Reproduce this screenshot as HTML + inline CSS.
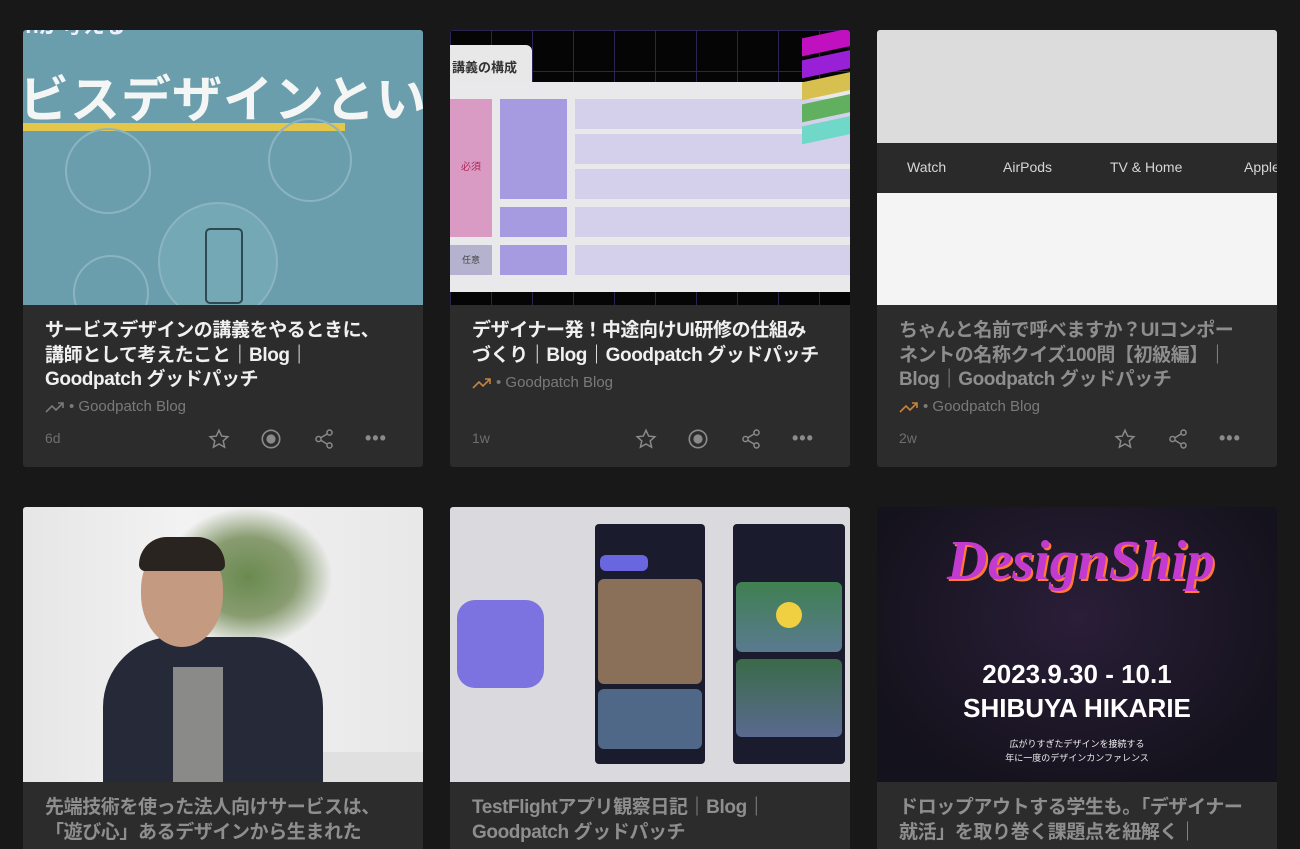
<!DOCTYPE html>
<html><head><meta charset="utf-8"><style>
*{margin:0;padding:0;box-sizing:border-box}
html,body{width:1300px;height:849px;overflow:hidden}
body{background:#181818;font-family:"Liberation Sans","Noto Sans CJK JP",sans-serif;position:relative}
.card{position:absolute;width:400px;height:437px;background:#2c2c2c;border-radius:3px;overflow:hidden}
.card.b{height:342px;border-radius:3px 3px 0 0}
.img{position:absolute;left:0;top:0;width:400px;height:275px;overflow:hidden}
.t{position:absolute;left:22px;top:289px;width:350px;font-size:19px;font-weight:bold;line-height:24.5px;color:#f0f0f0;letter-spacing:-0.4px}
.t.r{color:#8e8e8e}
.src{position:absolute;left:22px;top:368px;font-size:15px;color:#7a7a7a;display:flex;align-items:center;gap:4px}
.meta{position:absolute;left:22px;top:400px;font-size:14px;color:#6e6e6e}
.ic{position:absolute;top:398px}
</style></head><body>

<!-- card 1 -->
<div class="card" style="left:23px;top:30px">
 <div class="img" style="background:#6a9eac">
  <div style="position:absolute;left:-10px;top:-22px;font-size:22px;font-weight:bold;color:#eef">chが考える</div>
  <div style="position:absolute;left:-4px;top:30px;font-size:50px;font-weight:bold;color:#f4f6f6;white-space:nowrap;letter-spacing:1px">ビスデザインとい</div>
  <div style="position:absolute;left:0;top:93px;width:322px;height:8px;background:#e3c64a"></div>
  <div style="position:absolute;left:42px;top:98px;width:86px;height:86px;border-radius:50%;border:2px solid #8bb4c0"></div>
  <div style="position:absolute;left:245px;top:88px;width:84px;height:84px;border-radius:50%;border:2px solid #8bb4c0"></div>
  <div style="position:absolute;left:135px;top:172px;width:120px;height:120px;border-radius:50%;border:2px solid #8bb4c0;background:#74a8b5"></div>
  <div style="position:absolute;left:182px;top:198px;width:38px;height:76px;border-radius:5px;border:2px solid #2d4a52"></div>
  <div style="position:absolute;left:50px;top:225px;width:76px;height:76px;border-radius:50%;border:2px solid #8bb4c0"></div>
 </div>
 <div class="t">サービスデザインの講義をやるときに、講師として考えたこと｜Blog｜Goodpatch グッドパッチ</div>
 <div class="src"><svg width="20" height="12" viewBox="0 0 20 12"><path d="M1 11l6-6 4 4 7-7M13 2h5v5" fill="none" stroke="#7a7a7a" stroke-width="1.6"/></svg> • Goodpatch Blog</div>
 <div class="meta">6d</div>
 <svg class="ic" style="left:185px" width="22" height="22" viewBox="0 0 24 24"><path d="M12 2.5l2.9 6.3 6.8.7-5.1 4.6 1.5 6.8L12 17.4l-6.1 3.5 1.5-6.8-5.1-4.6 6.8-.7z" fill="none" stroke="#8a8a8a" stroke-width="1.6"/></svg>
 <svg class="ic" style="left:237px" width="22" height="22" viewBox="0 0 24 24"><circle cx="12" cy="12" r="9.5" fill="none" stroke="#8a8a8a" stroke-width="1.8"/><circle cx="12" cy="12" r="5" fill="#8a8a8a"/></svg>
 <svg class="ic" style="left:290px" width="22" height="22" viewBox="0 0 24 24"><circle cx="18" cy="5" r="2.8" fill="none" stroke="#8a8a8a" stroke-width="1.6"/><circle cx="6" cy="12" r="2.8" fill="none" stroke="#8a8a8a" stroke-width="1.6"/><circle cx="18" cy="19" r="2.8" fill="none" stroke="#8a8a8a" stroke-width="1.6"/><path d="M8.5 10.7l7-4.3M8.5 13.3l7 4.3" stroke="#8a8a8a" stroke-width="1.6"/></svg>
 <div style="position:absolute;left:342px;top:398px;color:#8a8a8a;font-size:18px;font-weight:bold;letter-spacing:1px">•••</div>
</div>

<!-- card 2 -->
<div class="card" style="left:450px;top:30px">
 <div class="img" style="background:#050505;background-image:linear-gradient(#2a2550 1px,transparent 1px),linear-gradient(90deg,#2a2550 1px,transparent 1px);background-size:41px 41px">
  <div style="position:absolute;left:0;top:15px;width:82px;height:50px;background:#e8e8e8;border-radius:0 6px 0 0;font-size:13px;font-weight:bold;color:#333;padding:12px 0 0 2px">講義の構成</div>
  <div style="position:absolute;left:0;top:52px;width:400px;height:210px;background:#e9e9ec"></div>
  <div style="position:absolute;left:0;top:69px;width:42px;height:138px;background:#d99bc3;color:#b0285a;font-size:10px;text-align:center;line-height:138px">必須</div>
  <div style="position:absolute;left:0;top:215px;width:42px;height:30px;background:#b5b2cf;color:#444;font-size:9px;text-align:center;line-height:30px">任意</div>
  <div style="position:absolute;left:50px;top:69px;width:67px;height:100px;background:#a69be0"></div>
  <div style="position:absolute;left:50px;top:177px;width:67px;height:30px;background:#a69be0"></div>
  <div style="position:absolute;left:50px;top:215px;width:67px;height:30px;background:#a69be0"></div>
  <div style="position:absolute;left:125px;top:69px;width:275px;height:30px;background:#d4d0ec"></div>
  <div style="position:absolute;left:125px;top:104px;width:275px;height:30px;background:#d4d0ec"></div>
  <div style="position:absolute;left:125px;top:139px;width:275px;height:30px;background:#d4d0ec"></div>
  <div style="position:absolute;left:125px;top:177px;width:275px;height:30px;background:#d4d0ec"></div>
  <div style="position:absolute;left:125px;top:215px;width:275px;height:30px;background:#d4d0ec"></div>
  <div style="position:absolute;left:352px;top:2px;width:60px;height:18px;background:#c010c0;transform:skewY(-12deg)"></div>
  <div style="position:absolute;left:352px;top:24px;width:60px;height:18px;background:#9a20d8;transform:skewY(-12deg)"></div>
  <div style="position:absolute;left:352px;top:46px;width:60px;height:18px;background:#d8c050;transform:skewY(-12deg)"></div>
  <div style="position:absolute;left:352px;top:68px;width:60px;height:18px;background:#60b060;transform:skewY(-12deg)"></div>
  <div style="position:absolute;left:352px;top:90px;width:60px;height:18px;background:#70d8c8;transform:skewY(-12deg)"></div>
 </div>
 <div class="t">デザイナー発！中途向けUI研修の仕組みづくり｜Blog｜Goodpatch グッドパッチ</div>
 <div class="src" style="top:344px"><svg width="20" height="12" viewBox="0 0 20 12"><path d="M1 11l6-6 4 4 7-7M13 2h5v5" fill="none" stroke="#c8833a" stroke-width="1.6"/></svg> • Goodpatch Blog</div>
 <div class="meta">1w</div>
 <svg class="ic" style="left:185px" width="22" height="22" viewBox="0 0 24 24"><path d="M12 2.5l2.9 6.3 6.8.7-5.1 4.6 1.5 6.8L12 17.4l-6.1 3.5 1.5-6.8-5.1-4.6 6.8-.7z" fill="none" stroke="#8a8a8a" stroke-width="1.6"/></svg>
 <svg class="ic" style="left:237px" width="22" height="22" viewBox="0 0 24 24"><circle cx="12" cy="12" r="9.5" fill="none" stroke="#8a8a8a" stroke-width="1.8"/><circle cx="12" cy="12" r="5" fill="#8a8a8a"/></svg>
 <svg class="ic" style="left:290px" width="22" height="22" viewBox="0 0 24 24"><circle cx="18" cy="5" r="2.8" fill="none" stroke="#8a8a8a" stroke-width="1.6"/><circle cx="6" cy="12" r="2.8" fill="none" stroke="#8a8a8a" stroke-width="1.6"/><circle cx="18" cy="19" r="2.8" fill="none" stroke="#8a8a8a" stroke-width="1.6"/><path d="M8.5 10.7l7-4.3M8.5 13.3l7 4.3" stroke="#8a8a8a" stroke-width="1.6"/></svg>
 <div style="position:absolute;left:342px;top:398px;color:#8a8a8a;font-size:18px;font-weight:bold;letter-spacing:1px">•••</div>
</div>

<!-- card 3 -->
<div class="card" style="left:877px;top:30px">
 <div class="img" style="background:#dcdcdc">
  <div style="position:absolute;left:0;top:113px;width:400px;height:50px;background:#2a2a2a;color:#d6d6d6;font-size:14px;white-space:nowrap">
   <span style="position:absolute;left:30px;top:16px">Watch</span><span style="position:absolute;left:126px;top:16px">AirPods</span><span style="position:absolute;left:233px;top:16px">TV &amp; Home</span><span style="position:absolute;left:367px;top:16px">Apple</span>
  </div>
  <div style="position:absolute;left:0;top:163px;width:400px;height:112px;background:#f4f4f4"></div>
 </div>
 <div class="t r">ちゃんと名前で呼べますか？UIコンポーネントの名称クイズ100問【初級編】｜Blog｜Goodpatch グッドパッチ</div>
 <div class="src"><svg width="20" height="12" viewBox="0 0 20 12"><path d="M1 11l6-6 4 4 7-7M13 2h5v5" fill="none" stroke="#c8833a" stroke-width="1.6"/></svg> • Goodpatch Blog</div>
 <div class="meta">2w</div>
 <svg class="ic" style="left:237px" width="22" height="22" viewBox="0 0 24 24"><path d="M12 2.5l2.9 6.3 6.8.7-5.1 4.6 1.5 6.8L12 17.4l-6.1 3.5 1.5-6.8-5.1-4.6 6.8-.7z" fill="none" stroke="#8a8a8a" stroke-width="1.6"/></svg>
 <svg class="ic" style="left:290px" width="22" height="22" viewBox="0 0 24 24"><circle cx="18" cy="5" r="2.8" fill="none" stroke="#8a8a8a" stroke-width="1.6"/><circle cx="6" cy="12" r="2.8" fill="none" stroke="#8a8a8a" stroke-width="1.6"/><circle cx="18" cy="19" r="2.8" fill="none" stroke="#8a8a8a" stroke-width="1.6"/><path d="M8.5 10.7l7-4.3M8.5 13.3l7 4.3" stroke="#8a8a8a" stroke-width="1.6"/></svg>
 <div style="position:absolute;left:342px;top:398px;color:#8a8a8a;font-size:18px;font-weight:bold;letter-spacing:1px">•••</div>
</div>

<!-- row 2 -->
<div class="card b" style="left:23px;top:507px">
 <div class="img" style="background:linear-gradient(90deg,#e6e6e6,#f2f2f2 40%,#e8e8e8)">
  <div style="position:absolute;left:140px;top:0;width:170px;height:140px;background:radial-gradient(ellipse at center,#6a8a50 0%,#889c70 40%,transparent 70%)"></div>
  <div style="position:absolute;left:80px;top:130px;width:220px;height:170px;background:#262a38;border-radius:70px 70px 0 0"></div>
  <div style="position:absolute;left:150px;top:160px;width:50px;height:115px;background:#8a8a88"></div>
  <div style="position:absolute;left:118px;top:35px;width:82px;height:105px;background:#c49a80;border-radius:45% 45% 50% 50%"></div>
  <div style="position:absolute;left:116px;top:30px;width:86px;height:34px;background:#2a2420;border-radius:45px 45px 10px 10px"></div>
  <div style="position:absolute;left:300px;top:245px;width:100px;height:30px;background:#e0e0e0"></div>
 </div>
 <div class="t r">先端技術を使った法人向けサービスは、「遊び心」あるデザインから生まれた</div>
</div>

<div class="card b" style="left:450px;top:507px">
 <div class="img" style="background:#dadade">
  <div style="position:absolute;left:7px;top:93px;width:87px;height:88px;background:#7c72e0;border-radius:18px"></div>
  <div style="position:absolute;left:145px;top:17px;width:110px;height:240px;background:#1a1c2e;border-radius:4px"></div>
  <div style="position:absolute;left:150px;top:48px;width:48px;height:16px;background:#6a66e0;border-radius:6px"></div>
  <div style="position:absolute;left:148px;top:72px;width:104px;height:105px;background:#8a7058;border-radius:6px"></div>
  <div style="position:absolute;left:148px;top:182px;width:104px;height:60px;background:#506888;border-radius:6px"></div>
  <div style="position:absolute;left:283px;top:17px;width:112px;height:240px;background:#1a1c2e;border-radius:4px"></div>
  <div style="position:absolute;left:286px;top:75px;width:106px;height:70px;background:linear-gradient(#3f8050,#5a7a90);border-radius:6px"></div>
  <div style="position:absolute;left:326px;top:95px;width:26px;height:26px;background:#f0d040;border-radius:50%"></div>
  <div style="position:absolute;left:286px;top:152px;width:106px;height:78px;background:linear-gradient(#3a6a48,#5a6a90);border-radius:6px"></div>
 </div>
 <div class="t r">TestFlightアプリ観察日記｜Blog｜Goodpatch グッドパッチ</div>
</div>

<div class="card b" style="left:877px;top:507px">
 <div class="img" style="background:radial-gradient(ellipse at 50% 40%,#2a1e38,#14121c 80%)">
  <div style="position:absolute;left:70px;top:22px;font-size:56px;font-style:italic;font-weight:bold;color:#c23ad0;font-family:'Liberation Serif',serif;text-shadow:2px 2px 0 #ff7a30">DesignShip</div>
  <div style="position:absolute;left:0;width:400px;top:152px;text-align:center;color:#fff;font-size:26px;font-weight:bold">2023.9.30 - 10.1</div>
  <div style="position:absolute;left:0;width:400px;top:186px;text-align:center;color:#fff;font-size:26px;font-weight:bold">SHIBUYA HIKARIE</div>
  <div style="position:absolute;left:0;width:400px;top:230px;text-align:center;color:#eee;font-size:9px;line-height:14px">広がりすぎたデザインを接続する<br>年に一度のデザインカンファレンス</div>
 </div>
 <div class="t r">ドロップアウトする学生も。「デザイナー就活」を取り巻く課題点を紐解く｜</div>
</div>
</body></html>
